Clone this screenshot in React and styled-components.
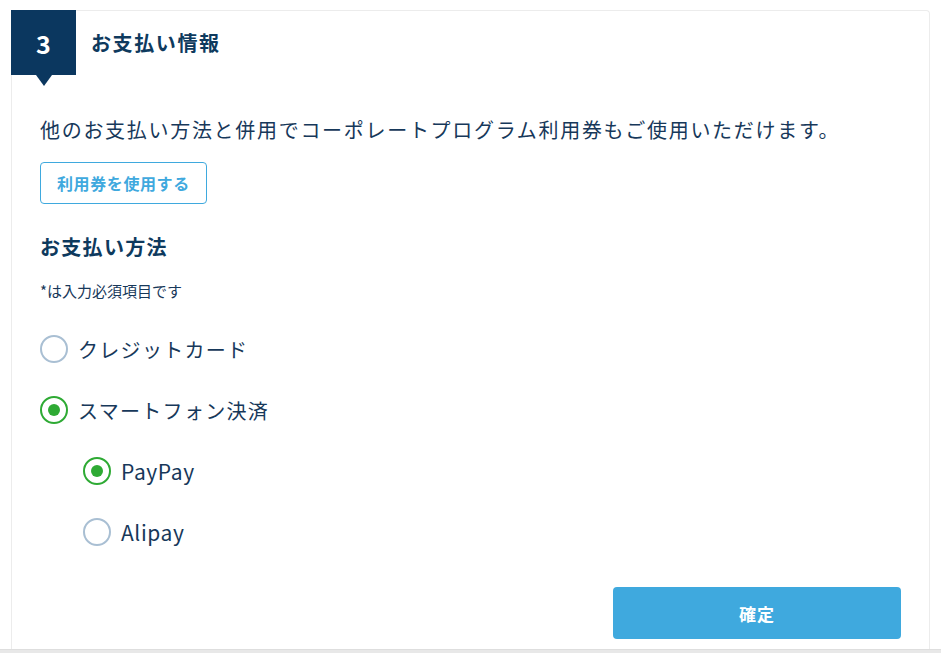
import React, { useState } from 'react';
import styled, { createGlobalStyle } from 'styled-components';

const GlobalStyle = createGlobalStyle`
	html, body {
		margin: 0;
		padding: 0;
		background: #ffffff;
	}
	body {
		font-family: "Noto Sans CJK JP", "Noto Sans", sans-serif;
		color: #0e3a5e;
	}
`

const Page = styled.div`
	width: 941px;
	height: 653px;
	display: flex;
	flex-direction: column;
	overflow: hidden;
`

const Card = styled.section`
	margin: 10px 11px 0 11px;
	border: 1px solid #ececec;
	border-bottom: none;
	border-radius: 4px 4px 0 0;
	flex: 1;
	display: flex;
	flex-direction: column;
`

const Header = styled.div`
	display: flex;
	align-items: center;
	height: 64px;
`

const StepBadge = styled.div`
	position: relative;
	margin: -1px 0 0 -1px;
	width: 65px;
	height: 65px;
	background: #0b375f;
	color: #ffffff;
	font-size: 25px;
	font-weight: bold;
	display: flex;
	align-items: center;
	justify-content: center;
	&:after {
		content: '';
		position: absolute;
		left: 50%;
		bottom: -11px;
		margin-left: -8px;
		border-left: 8px solid transparent;
		border-right: 8px solid transparent;
		border-top: 11px solid #0b375f;
	}
`

const Title = styled.h2`
	margin: -2px 0 0 15px;
	font-size: 20px;
	font-weight: bold;
	letter-spacing: 1.6px;
	color: #0e3a5e;
`

const Body = styled.div`
	padding: 0 28px 10px 28px;
	display: flex;
	flex-direction: column;
	align-items: flex-start;
`

const Intro = styled.p`
	margin: 40px 0 0 0;
	font-size: 20px;
	line-height: 30px;
	letter-spacing: 1.7px;
	color: #17385a;
`

const OutlineButton = styled.button`
	margin-top: 17px;
	height: 42px;
	padding: 0 16px;
	border: 1px solid #3fa9de;
	border-radius: 4px;
	background: #ffffff;
	color: #3fa9de;
	font-family: inherit;
	font-size: 16px;
	font-weight: bold;
	letter-spacing: 0.6px;
	cursor: pointer;
`

const SectionHeading = styled.h3`
	margin: 28px 0 0 0;
	font-size: 20px;
	line-height: 30px;
	font-weight: bold;
	letter-spacing: 1.3px;
	color: #0e3a5e;
`

const Note = styled.p`
	margin: 17px 0 0 0;
	font-size: 15px;
	line-height: 24px;
	color: #17385a;
`

const Options = styled.div`
	margin-top: 32px;
	display: flex;
	flex-direction: column;
	gap: 33px;
`

const Option = styled.label`
	display: flex;
	align-items: center;
	gap: 10px;
	height: 28px;
	padding-left: ${p => p.$indent ? '43px' : '0'};
	font-size: ${p => p.$latin ? '21px' : '20px'};
	letter-spacing: ${p => p.$latin ? '0.6px' : '1.3px'};
	color: #17385a;
	cursor: pointer;
`

const Radio = styled.span`
	box-sizing: border-box;
	width: 28px;
	height: 28px;
	border-radius: 50%;
	border: 2px solid ${p => p.$checked ? '#2eaa34' : '#a9bfd3'};
	display: flex;
	align-items: center;
	justify-content: center;
	flex-shrink: 0;
	&:after {
		content: '';
		width: 12px;
		height: 12px;
		border-radius: 50%;
		background: #2eaa34;
		display: ${p => p.$checked ? 'block' : 'none'};
	}
`

const Actions = styled.div`
	align-self: stretch;
	display: flex;
	justify-content: flex-end;
	margin-top: 41px;
`

const SubmitButton = styled.button`
	width: 288px;
	height: 52px;
	border: none;
	border-radius: 4px;
	background: #3fa9de;
	color: #ffffff;
	font-family: inherit;
	font-size: 17px;
	font-weight: bold;
	letter-spacing: 1px;
	cursor: pointer;
`

const Footer = styled.div`
	height: 5px;
	background: #e8e8e8;
	border-top: 1px solid #dedede;
`

const App = () => {
	const [method, setMethod] = useState('phone');
	const [wallet, setWallet] = useState('paypay');

	return (
		<Page>
			<GlobalStyle />
			<Card>
				<Header>
					<StepBadge>3</StepBadge>
					<Title>お支払い情報</Title>
				</Header>
				<Body>
					<Intro>他のお支払い方法と併用でコーポレートプログラム利用券もご使用いただけます。</Intro>
					<OutlineButton>利用券を使用する</OutlineButton>
					<SectionHeading>お支払い方法</SectionHeading>
					<Note>*は入力必須項目です</Note>
					<Options>
						<Option onClick={() => setMethod('card')}>
							<Radio $checked={method === 'card'} />
							クレジットカード
						</Option>
						<Option onClick={() => setMethod('phone')}>
							<Radio $checked={method === 'phone'} />
							スマートフォン決済
						</Option>
						<Option $indent $latin onClick={() => setWallet('paypay')}>
							<Radio $checked={wallet === 'paypay'} />
							PayPay
						</Option>
						<Option $indent $latin onClick={() => setWallet('alipay')}>
							<Radio $checked={wallet === 'alipay'} />
							Alipay
						</Option>
					</Options>
					<Actions>
						<SubmitButton>確定</SubmitButton>
					</Actions>
				</Body>
			</Card>
			<Footer />
		</Page>
	);
};

export default App;
